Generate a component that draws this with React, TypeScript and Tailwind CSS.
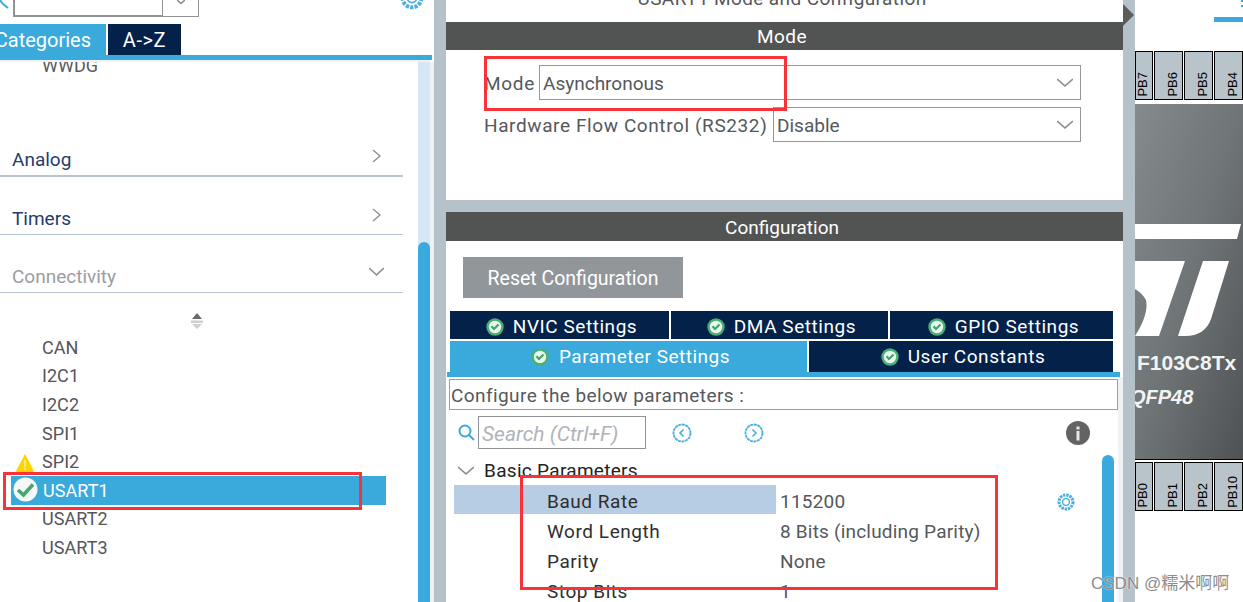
import React from "react";

const F = "font-['Roboto','Liberation_Sans',sans-serif]";

function Chevron({ dir, className }: { dir: "right" | "down"; className?: string }) {
  return (
    <svg width="12" height="14" viewBox="0 0 12 14" preserveAspectRatio="none" className={className} fill="none" stroke="#8a8d90" strokeWidth="1.3">
      {dir === "right" ? <path d="M2 1 L9 7 L2 13" /> : <path d="M0 3 L6 10 L12 3" />}
    </svg>
  );
}

function Check({ size = 18 }: { size?: number }) {
  return (
    <svg width={size} height={size} viewBox="0 0 18 18" className="shrink-0">
      <circle cx="9" cy="9" r="8.7" fill="#4aaf76" />
      <circle cx="9" cy="9" r="6.2" fill="#eaf5ee" />
      <path d="M5.5 8.3 L8 11 L12.5 6.5" fill="none" stroke="#3aa866" strokeWidth="2.2" />
    </svg>
  );
}

function BigCheck() {
  return (
    <svg width="25" height="25" viewBox="0 0 25 25" className="shrink-0">
      <circle cx="12.5" cy="12.5" r="12" fill="#f4f8f6" />
      <path d="M5 13 L10.5 18 L20 7.5" fill="none" stroke="#45a86c" strokeWidth="3.6" />
    </svg>
  );
}

function Gear({ size = 18 }: { size?: number }) {
  return (
    <svg width={size} height={size} viewBox="0 0 18 18" fill="none" stroke="#4aaee0">
      <circle cx="9" cy="9" r="7" strokeWidth="3" strokeDasharray="2.4 0.9" />
      <circle cx="9" cy="9" r="3.4" strokeWidth="1.3" />
    </svg>
  );
}

function NavTab({ label, w, top = "pt-[4px]" }: { label: string; w: string; top?: string }) {
  return (
    <div className={`${w} ${top} pl-[4px] h-full bg-[#032149] text-white flex items-center justify-center gap-[9px] text-[19px] tracking-[0.55px]`}>
      <Check />
      <span>{label}</span>
    </div>
  );
}

function Pin({ label, w = "w-[29px]", pad = "pl-[12px]" }: { label: string; w?: string; pad?: string }) {
  return (
    <div className={`${w} ${pad} h-[49px] bg-[#b8c3ca] border border-black flex items-end pb-[2px] justify-start shrink-0`}>
      <span className="[writing-mode:vertical-rl] rotate-180 text-[13px] leading-[11px] text-black font-['Liberation_Sans',sans-serif]">{label}</span>
    </div>
  );
}

function Param({ name, value, active }: { name: string; value: string; active?: boolean }) {
  return (
    <div className="h-[30px] flex items-center relative">
      <div className={`w-[322px] h-[29px] pl-[93px] flex items-center ${active ? "bg-[#b7cde3]" : ""}`}>
        <span className="text-[#2e2e2e] text-[19px] leading-[20px] tracking-[0.55px] pt-[5px]">{name}</span>
      </div>
      <span className="pl-[4px] pt-[5px] leading-[20px] text-[#55585c] text-[19px] tracking-[0.2px]">{value}</span>
    </div>
  );
}

export default function App() {
  const items = ["CAN", "I2C1", "I2C2", "SPI1", "SPI2", "USART1", "USART2", "USART3"];
  return (
    <div className={`${F} relative w-[1243px] h-[602px] overflow-hidden bg-white flex`}>
      {/* left panel */}
      <div className="w-[434px] h-full flex flex-col shrink-0">
        <div className="h-[24px] flex items-start relative shrink-0">
          <svg width="10" height="10" viewBox="0 0 10 10" fill="none" stroke="#3aa9dc" strokeWidth="2"><path d="M0 0 L3 4 M3 4 L8 8" /></svg>
          <div className="ml-[3px] w-[186px] h-[17px] flex">
            <div className="w-[150px] h-full border-2 border-t-0 border-[#909498] border-r-[1px]" />
            <div className="w-[36px] h-full border border-t-0 border-l-0 border-[#909498] flex justify-center">
              <svg width="8" height="5" viewBox="0 0 8 5" fill="none" stroke="#8a8d90" strokeWidth="1.6"><path d="M0 0 L4 3.5 L8 0" /></svg>
            </div>
          </div>
          <div className="absolute left-[400px] -top-[14px]"><Gear size={24} /></div>
        </div>
        <div className="h-[31px] flex shrink-0 text-white text-[20px]">
          <div className="w-[106px] bg-[#3aa9dc] flex items-center justify-end pr-[15px]">Categories</div>
          <div className="w-[73px] ml-[2px] bg-[#032149] flex items-center justify-center tracking-[0.6px]">A-&gt;Z</div>
        </div>
        <div className="h-[5px] w-[432px] bg-[#3aa9dc] shrink-0" />
        <div className="h-[2px] w-[430px] bg-[#eef2f5] shrink-0" />
        <div className="flex-1 flex min-h-0">
          <div className="w-[418px] overflow-hidden">
            <div className="h-[20px] pl-[42px] text-[18px] leading-[20px] -mt-[6px] text-[#5a5a5e]">WWDG</div>
            <div className="w-[403px] h-[101px] flex items-end pb-[1px] justify-between border-b-2 border-[#b8c3d3] pl-[12px] pr-[20px] text-[#263c6b] text-[19px]">
              <span>Analog</span><Chevron dir="right" className="mb-[11px]" />
            </div>
            <div className="w-[403px] h-[58px] flex items-end pb-[1px] justify-between border-b border-[#b8c3d3] pl-[12px] pr-[20px] text-[#263c6b] text-[19px]">
              <span>Timers</span><Chevron dir="right" className="mb-[11px]" />
            </div>
            <div className="w-[403px] h-[58px] flex items-end pb-[1px] justify-between border-b border-[#b8c3d3] pl-[12px] pr-[19px] text-[#9a9da2] text-[19px]">
              <span>Connectivity</span><Chevron dir="down" className="w-[15px] mb-[12px]" />
            </div>
            <div className="w-[403px] h-[37px] flex items-end justify-center">
              <svg width="14" height="18" viewBox="0 0 14 18" className="ml-[-10px]">
                <path d="M7 1 L12 7 L2 7 Z" fill="#6a6a6a" />
                <rect x="1" y="8.5" width="12" height="2.5" fill="#cfcfcf" />
                <path d="M2 12 L12 12 L7 17 Z" fill="#cfcfcf" />
              </svg>
            </div>
            <div className="pt-[3px]">
              {items.map((it) => {
                const active = it === "USART1";
                return (
                  <div key={it} className={`h-[28.6px] ml-[11px] w-[375px] flex items-center text-[18px] relative ${active ? "bg-[#3aa9dc] text-white" : "text-[#55555a]"}`}>
                    {active && <div className="absolute left-[2px] top-[1px]"><BigCheck /></div>}
                    {it === "SPI2" && (
                      <svg width="20" height="18" viewBox="0 0 20 18" className="absolute left-[4px] top-[7px]">
                        <path d="M10 0 L19 17 Q19 18 18 18 L2 18 Q1 18 1 17 Z" fill="#ffd400" />
                        <rect x="9.2" y="6" width="1.6" height="7" fill="#fff2a8" />
                        <rect x="9.2" y="14" width="1.6" height="2" fill="#fff2a8" />
                      </svg>
                    )}
                    <span className={`${active ? "pl-[32px]" : "pl-[31px]"} tracking-[0.05px]`}>{it}</span>
                  </div>
                );
              })}
            </div>
          </div>
          <div className="w-[12px] bg-[#d6e6f4] flex flex-col justify-end">
            <div className="h-[360px] bg-[#3aa9dc] rounded-t-[6px]" />
          </div>
          <div className="w-[4px] bg-[#eef2f5]" />
        </div>
      </div>

      <div className="w-[12px] h-full bg-[#b6c2c9] shrink-0" />

      {/* center panel */}
      <div className="w-[677px] h-full flex flex-col shrink-0 relative">
        <div className="h-[22px] flex items-end justify-center pb-[14px] pr-[5px] text-[#55585c] text-[19px] leading-[18px] tracking-[0.4px] shrink-0">
          <span className="whitespace-nowrap">USART1 Mode and Configuration</span>
        </div>
        <div className="h-[28px] pt-[2px] bg-[#525453] flex items-center justify-center pr-[5px] text-white text-[19px] tracking-[0.5px] shrink-0">Mode</div>
        <div className="h-[150px] pt-[15px] pl-[38px] shrink-0 text-[#55585c] text-[19px]">
          <div className="h-[35px] flex items-center">
            <span className="w-[55px] pt-[4px] tracking-[0.7px]">Mode</span>
            <div className="w-[542px] h-full border border-[#95989b] flex items-center justify-between pl-[3px] pr-[7px]">
              <span className="pt-[4px]">Asynchronous</span><Chevron dir="down" className="w-[16px]" />
            </div>
          </div>
          <div className="h-[35px] mt-[7px] flex items-center">
            <span className="w-[289px] pt-[4px] whitespace-nowrap tracking-[0.6px]">Hardware Flow Control (RS232)</span>
            <div className="w-[308px] h-full border border-[#95989b] flex items-center justify-between pl-[3px] pr-[7px]">
              <span className="pt-[4px]">Disable</span><Chevron dir="down" className="w-[16px]" />
            </div>
          </div>
        </div>
        <div className="h-[12px] bg-[#b6c2c9] shrink-0" />
        <div className="h-[29px] pt-[3px] bg-[#525453] flex items-center justify-center pr-[5px] text-white text-[19px] shrink-0">Configuration</div>
        <div className="pt-[16px] pl-[17px] shrink-0">
          <div className="w-[220px] h-[41px] pt-[3px] bg-[#91969a] text-white text-[19.5px] flex items-center justify-center">Reset Configuration</div>
        </div>
        <div className="flex h-[28px] mt-[13px] ml-[4px] gap-[2px] shrink-0">
          <NavTab label="NVIC Settings" w="w-[219px]" />
          <NavTab label="DMA Settings" w="w-[217px]" />
          <NavTab label="GPIO Settings" w="w-[223px]" />
        </div>
        <div className="flex h-[31px] mt-[2px] ml-[4px] gap-[2px] shrink-0">
          <div className="w-[357px] h-full pt-[1px] pl-[4px] bg-[#3aa9dc] text-white flex items-center justify-center gap-[10px] text-[19px] tracking-[0.5px]">
            <Check /><span>Parameter Settings</span>
          </div>
          <NavTab label="User Constants" w="w-[304px]" top="pt-[1px]" />
        </div>
        <div className="h-[5px] w-[673px] ml-[1px] bg-[#3aa9dc] shrink-0" />
        <div className="flex flex-1 min-h-0">
          <div className="w-[672px] flex flex-col min-h-0">
            <div className="h-[31px] w-[669px] ml-[3px] mt-[2px] pt-[4px] border border-[#9c9fa2] flex items-center pl-[1px] text-[#55585c] text-[19px] tracking-[0.42px] shrink-0">
              Configure the below parameters :
            </div>
            <div className="flex flex-1 min-h-0">
              <div className="w-[656px] overflow-hidden">
                <div className="h-[33px] mt-[6px] flex items-center pl-[12px]">
                  <svg width="17" height="17" viewBox="0 0 17 17" fill="none" stroke="#3aa9dc" strokeWidth="2">
                    <circle cx="7" cy="7" r="5.5" /><path d="M11 11 L16 16" />
                  </svg>
                  <div className="w-[168px] h-full ml-[3px] pt-[4px] border border-[#909498] flex items-center pl-[3px] text-[#b0b3b6] italic text-[21px] whitespace-nowrap">Search (Ctrl+F)</div>
                  {[0, 1].map((n) => (
                    <svg key={n} width="20" height="20" viewBox="0 0 20 20" fill="none" stroke="#4aaee0" className={n === 0 ? "ml-[26px]" : "ml-[52px]"}>
                      <circle cx="10" cy="10" r="8.5" strokeWidth="1.8" strokeDasharray="3 0.6" />
                      <path d={n === 0 ? "M11.5 6.5 L8 10 L11.5 13.5" : "M8.5 6.5 L12 10 L8.5 13.5"} strokeWidth="1.6" />
                    </svg>
                  ))}
                  <svg width="24" height="24" viewBox="0 0 24 24" className="ml-[302px]">
                    <circle cx="12" cy="12" r="12" fill="#636363" />
                    <rect x="10.5" y="10" width="3" height="9.5" fill="#e8e8e8" />
                    <rect x="10.5" y="5.5" width="3" height="3" fill="#e8e8e8" />
                  </svg>
                </div>
                <div className="h-[29px] mt-[6px] flex items-center pl-[12px] pt-[2px] text-[#222] text-[19px] tracking-[0.3px]">
                  <Chevron dir="down" className="w-[16px]" />
                  <span className="ml-[10px] pt-[2px]">Basic Parameters</span>
                </div>
                <div className="ml-[8px] relative">
                  <Param name="Baud Rate" value="115200" active />
                  <div className="absolute left-[603px] top-[9px]"><Gear size={18} /></div>
                  <Param name="Word Length" value="8 Bits (including Parity)" />
                  <Param name="Parity" value="None" />
                  <Param name="Stop Bits" value="1" />
                </div>
              </div>
              <div className="w-[12px] mt-[45px] bg-[#3aa9dc] rounded-t-[6px]" />
            </div>
          </div>
          <div className="w-[5px] bg-[#eef2f5]" />
        </div>
      </div>

      <div className="w-[12px] h-full bg-[#b6c2c9] shrink-0 relative">
        <svg width="12" height="22" viewBox="0 0 12 22" className="absolute top-[4px] left-0">
          <path d="M0 0 L11 11 L0 22 Z" fill="#5c5c5c" />
        </svg>
      </div>

      {/* right panel */}
      <div className="w-[108px] h-full overflow-hidden flex flex-col shrink-0">
        <div className="h-[17px] shrink-0">
          <div className="ml-[106px] w-[2px] h-[7px] border-l-2 border-dotted border-[#3aa9dc]" />
        </div>
        <div className="h-[5px] ml-[79px] w-[29px] bg-[#3aa9dc] shrink-0" />
        <div className="h-[29px] shrink-0" />
        <div className="flex gap-[1px] shrink-0 h-[49px]">
          <Pin label="PB7" w="w-[18px]" pad="pl-[1px]" /><Pin label="PB6" /><Pin label="PB5" /><Pin label="PB4" />
        </div>
        <div className="h-[3px] shrink-0" />
        <div className="h-[1px] bg-white shrink-0" />
        <div className="h-[356px] relative bg-gradient-to-br from-[#858a8d] via-[#6f7477] to-[#4e5254] border-b border-black shrink-0 overflow-hidden">
          <svg width="108" height="116" viewBox="0 0 108 116" className="absolute left-0 top-[120px]">
            <path d="M0 0 L106 0 L102 15 L0 15 Z" fill="#fff" />
            <path d="M0 37 L50 37 L24 112 L0 112 Q14 90 11 76 Q8 70 0 65 Z" fill="#fff" />
            <path d="M68 37 L94 37 L76 95 Q70 112 50 112 L43 112 Z" fill="#fff" />
          </svg>
          <div className="absolute left-[2px] top-[247px] text-[#f2f4f4] font-bold text-[21px] leading-[24px] font-['Liberation_Sans',sans-serif] whitespace-nowrap">F103C8Tx</div>
          <div className="absolute -left-[5px] top-[281px] text-[#f2f4f4] font-bold italic text-[20px] leading-[24px] font-['Liberation_Sans',sans-serif] whitespace-nowrap">QFP48</div>
        </div>
        <div className="h-[2px] shrink-0" />
        <div className="flex gap-[1px] shrink-0 h-[49px]">
          <Pin label="PB0" w="w-[18px]" pad="pl-[1px]" /><Pin label="PB1" /><Pin label="PB2" /><Pin label="PB10" />
        </div>
      </div>

      {/* annotations */}
      <div className="absolute left-[484px] top-[56px] w-[303px] h-[55px] border-[3px] border-[#f73238]" />
      <div className="absolute left-[3px] top-[472px] w-[359px] h-[38px] border-[3px] border-[#f73238]" />
      <div className="absolute left-[520px] top-[475px] w-[478px] h-[115px] border-[3px] border-[#f73238]" />
      <div className="absolute left-[1091px] top-[574px] text-[17px] leading-[20px] text-[#8c8c8c] [text-shadow:0_0_2px_#ffffff] whitespace-nowrap font-['Liberation_Sans','Noto_Sans_CJK_SC',sans-serif]">CSDN @糯米啊啊</div>
    </div>
  );
}
